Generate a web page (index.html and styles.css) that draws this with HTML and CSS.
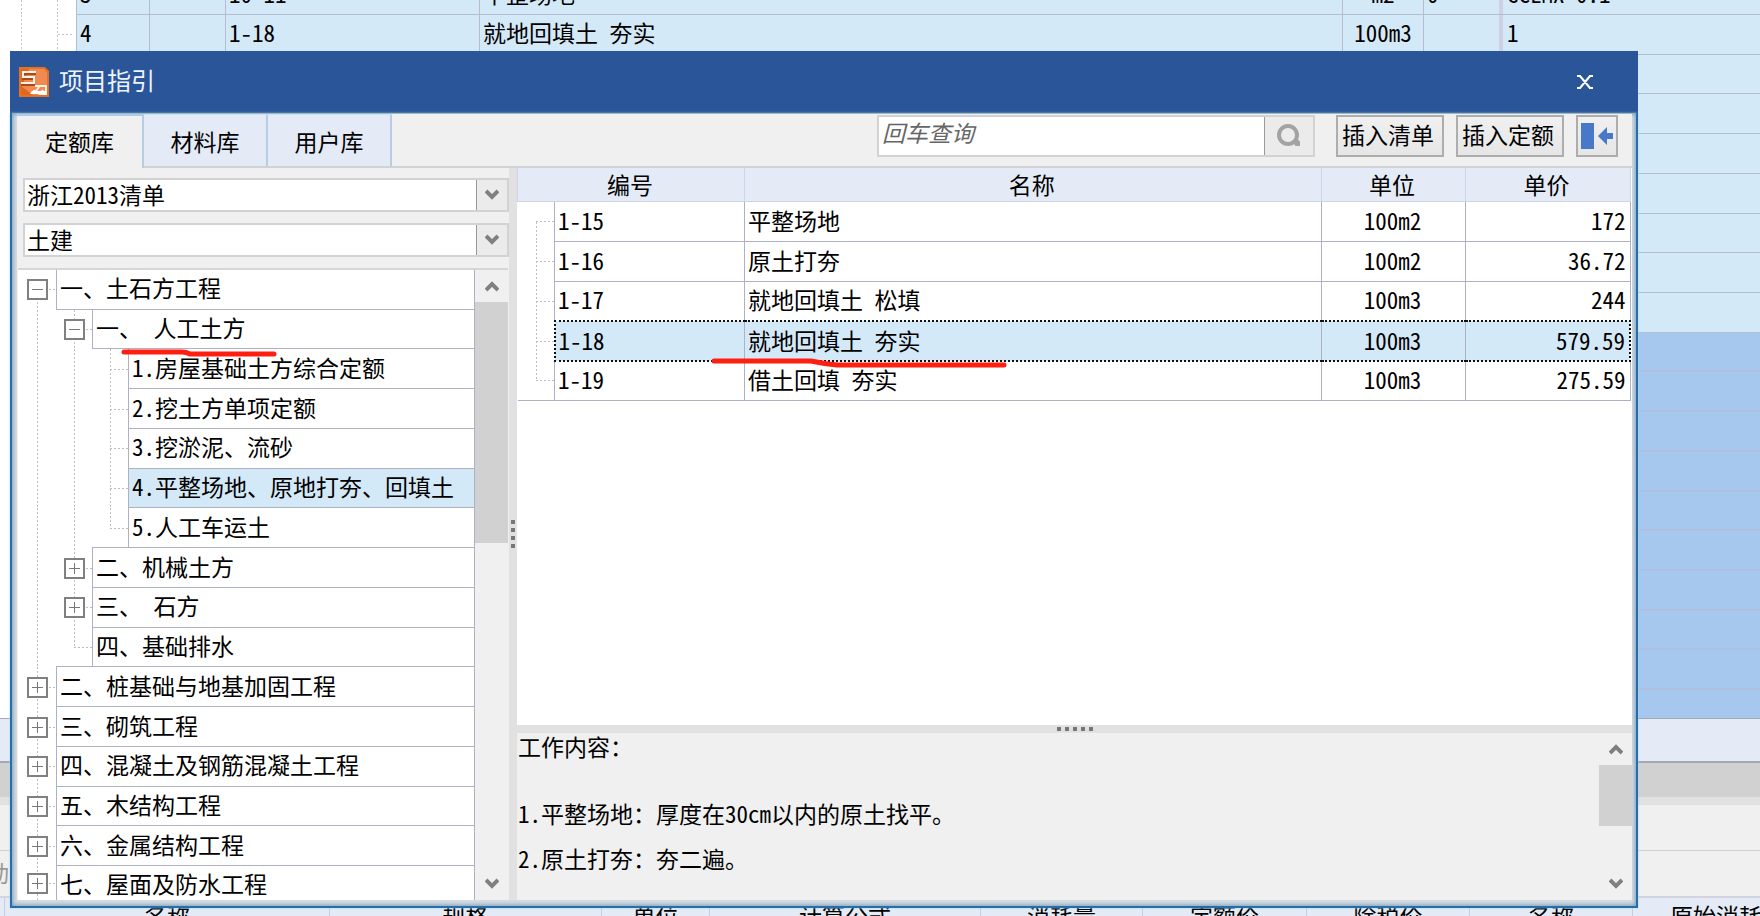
FILE: index.html
```html
<!DOCTYPE html>
<html lang="zh-CN">
<head>
<meta charset="utf-8">
<title>项目指引</title>
<link rel="stylesheet" href="styles.css">
</head>
<body>
<div class="workspace">
  <div class="sheet">
    <div class="sheet-row cut">
      <span class="gutter"></span><span class="cell n">3</span><span class="cell"></span><span class="cell n">10-11</span><span class="cell">平整场地</span><span class="cell unit n">m2</span><span class="cell n">0</span><span class="cell wide n">GCLMX*0.1</span>
    </div>
    <div class="sheet-row">
      <span class="gutter stub"></span><span class="cell n">4</span><span class="cell"></span><span class="cell n">1-18</span><span class="cell">就地回填土<i class="n">&nbsp;</i>夯实</span><span class="cell unit n">100m3</span><span class="cell"></span><span class="cell wide n">1</span>
    </div>
    <div class="sheet-row"></div><div class="sheet-row"></div><div class="sheet-row"></div><div class="sheet-row"></div><div class="sheet-row"></div><div class="sheet-row"></div><div class="sheet-row"></div>
    <div class="sheet-row deep"></div><div class="sheet-row deep"></div><div class="sheet-row deep"></div><div class="sheet-row deep"></div><div class="sheet-row deep"></div><div class="sheet-row deep"></div><div class="sheet-row deep"></div><div class="sheet-row deep"></div><div class="sheet-row deep"></div><div class="sheet-row deep last"></div>
  </div>
  <div class="band total"></div>
  <div class="band track"></div>
  <div class="band split"></div>
  <div class="band bar"></div>
  <div class="band tools">动</div>
  <div class="lower-head">
    <span></span><span>名称</span><span>规格</span><span>单位</span><span>计算公式</span><span>消耗量</span><span>定额价</span><span>除税价</span><span>名称</span><span class="rest">原始消耗</span>
  </div>
</div>

<section class="dialog" role="dialog" aria-labelledby="dialog-title">
  <header class="titlebar">
    <svg class="logo" viewBox="0 0 30 30" aria-hidden="true">
      <path d="M0 0h26l4 4v26H0z" fill="#e8701e"/>
      <path d="M2 2h23l3 3v23H2z" fill="#ee8a52"/>
      <path d="M2 2h8L2 22zM2 19l12 9H2z" fill="#e4661c"/>
      <path d="M17 7H4v5h11v6H2" fill="none" stroke="#a94a1c" stroke-width="2"/>
      <path d="M17 5H4v5h11v6H2" fill="none" stroke="#fff2e4" stroke-width="2"/>
      <path d="M16 19h12M20 20l-3 4h-3M27 19v8h-6l3-4" fill="none" stroke="#fff2e4" stroke-width="2"/>
      <path d="M13 24h14v3H11z" fill="#fff"/>
    </svg>
    <h1 id="dialog-title">项目指引</h1>
    <button class="close" type="button" aria-label="关闭">
      <svg viewBox="0 0 16 14"><path d="M0 1h4M12 1h4M0 13h4M12 13h4M3 1l10 12M13 1L3 13" fill="none" stroke="#fff" stroke-width="2"/></svg>
    </button>
  </header>

  <div class="dialog-body">
    <div class="toolbar">
      <div class="tabs" role="tablist">
        <button class="tab active" type="button" role="tab" aria-selected="true">定额库</button>
        <button class="tab" type="button" role="tab">材料库</button>
        <button class="tab" type="button" role="tab">用户库</button>
      </div>
      <div class="search">
        <input type="text" placeholder="回车查询" aria-label="回车查询">
        <button type="button" aria-label="查询"><svg viewBox="0 0 24 24"><circle cx="11" cy="11" r="9" fill="none" stroke="#a3a3a3" stroke-width="4"/><path d="M16 17l3 4h3v-3l-3-3" fill="#a3a3a3" stroke="#a3a3a3" stroke-width="2"/></svg></button>
      </div>
      <div class="actions">
        <button class="action" type="button">插入清单</button>
        <button class="action" type="button">插入定额</button>
        <button class="action icon" type="button" aria-label="停靠"><svg viewBox="0 0 34 28"><path d="M1 1h13v26H1zM18 14l9-9v6h6v6h-6v6z" fill="#4878c8"/></svg></button>
      </div>
    </div>

    <div class="main">
      <aside class="side">
        <div class="combo">
          <select aria-label="清单库"><option>浙江2013清单</option></select>
          <span class="combo-arrow"><svg class="chev" viewBox="0 0 14 12"><path d="M1 2l6 6 6-6" /></svg></span>
        </div>
        <div class="combo">
          <select aria-label="专业"><option>土建</option></select>
          <span class="combo-arrow"><svg class="chev" viewBox="0 0 14 12"><path d="M1 2l6 6 6-6" /></svg></span>
        </div>
        <div class="tree-box">
          <ul class="tree" role="tree">
            <li class="first"><span class="g half-b h"><button class="tg minus" type="button" aria-label="折叠"></button></span><span class="lb">一、土石方工程</span></li>
            <li><span class="g v"></span><span class="g v h"><button class="tg minus" type="button" aria-label="折叠"></button></span><span class="lb">一、<i class="n">&nbsp;</i>人工土方</span></li>
            <li><span class="g v"></span><span class="g v"></span><span class="g v h"></span><span class="lb"><i class="n">1.</i>房屋基础土方综合定额</span></li>
            <li><span class="g v"></span><span class="g v"></span><span class="g v h"></span><span class="lb"><i class="n">2.</i>挖土方单项定额</span></li>
            <li><span class="g v"></span><span class="g v"></span><span class="g v h"></span><span class="lb"><i class="n">3.</i>挖淤泥、流砂</span></li>
            <li><span class="g v"></span><span class="g v"></span><span class="g v h"></span><span class="lb on"><i class="n">4.</i>平整场地、原地打夯、回填土</span></li>
            <li><span class="g v"></span><span class="g v"></span><span class="g half-t h"></span><span class="lb"><i class="n">5.</i>人工车运土</span></li>
            <li><span class="g v"></span><span class="g v h"><button class="tg" type="button" aria-label="展开"></button></span><span class="lb">二、机械土方</span></li>
            <li><span class="g v"></span><span class="g v h"><button class="tg" type="button" aria-label="展开"></button></span><span class="lb">三、<i class="n">&nbsp;</i>石方</span></li>
            <li><span class="g v"></span><span class="g half-t h"></span><span class="lb">四、基础排水</span></li>
            <li><span class="g v h"><button class="tg" type="button" aria-label="展开"></button></span><span class="lb">二、桩基础与地基加固工程</span></li>
            <li><span class="g v h"><button class="tg" type="button" aria-label="展开"></button></span><span class="lb">三、砌筑工程</span></li>
            <li><span class="g v h"><button class="tg" type="button" aria-label="展开"></button></span><span class="lb">四、混凝土及钢筋混凝土工程</span></li>
            <li><span class="g v h"><button class="tg" type="button" aria-label="展开"></button></span><span class="lb">五、木结构工程</span></li>
            <li><span class="g v h"><button class="tg" type="button" aria-label="展开"></button></span><span class="lb">六、金属结构工程</span></li>
            <li><span class="g v h"><button class="tg" type="button" aria-label="展开"></button></span><span class="lb">七、屋面及防水工程</span></li>
          </ul>
          <div class="scroll">
            <span class="sb"><svg class="chev" viewBox="0 0 14 12"><path d="M1 10l6-6 6 6"/></svg></span>
            <span class="thumb tall"></span>
            <span class="sb end"><svg class="chev" viewBox="0 0 14 12"><path d="M1 2l6 6 6-6"/></svg></span>
          </div>
        </div>
      </aside>
      <div class="splitter-v"><i></i><i></i><i></i><i></i></div>
      <div class="content">
        <div class="table-area">
          <table>
            <colgroup><col class="c-gut"><col class="c-code"><col><col class="c-unit"><col class="c-price"></colgroup>
            <thead><tr><th colspan="2">编号</th><th>名称</th><th>单位</th><th>单价</th></tr></thead>
            <tbody>
              <tr><td class="gt half-b"></td><td class="n">1-15</td><td>平整场地</td><td class="n mid">100m2</td><td class="n num">172</td></tr>
              <tr><td class="gt"></td><td class="n">1-16</td><td>原土打夯</td><td class="n mid">100m2</td><td class="n num">36.72</td></tr>
              <tr><td class="gt"></td><td class="n">1-17</td><td>就地回填土<i class="n">&nbsp;</i>松填</td><td class="n mid">100m3</td><td class="n num">244</td></tr>
              <tr class="sel"><td class="gt"></td><td class="n">1-18</td><td>就地回填土<i class="n">&nbsp;</i>夯实</td><td class="n mid">100m3</td><td class="n num">579.59</td></tr>
              <tr class="last"><td class="gt half-t"></td><td class="n">1-19</td><td>借土回填<i class="n">&nbsp;</i>夯实</td><td class="n mid">100m3</td><td class="n num">275.59</td></tr>
            </tbody>
          </table>
        </div>
        <div class="splitter-h"><i></i><i></i><i></i><i></i><i></i></div>
        <div class="detail">
          <div class="detail-text">
            <p class="lead">工作内容：</p>
            <p><i class="n">1.</i>平整场地：厚度在<i class="n">30cm</i>以内的原土找平。</p>
            <p><i class="n">2.</i>原土打夯：夯二遍。</p>
          </div>
          <div class="scroll plain">
            <span class="sb"><svg class="chev" viewBox="0 0 14 12"><path d="M1 10l6-6 6 6"/></svg></span>
            <span class="thumb short"></span>
            <span class="sb end"><svg class="chev" viewBox="0 0 14 12"><path d="M1 2l6 6 6-6"/></svg></span>
          </div>
        </div>
      </div>
    </div>
  </div>
</section>

<svg class="mark mark-tree" viewBox="0 0 160 12" aria-hidden="true"><path d="M4 4h58q4 0 8 2h84"/></svg>
<svg class="mark mark-table" viewBox="0 0 300 12" aria-hidden="true"><path d="M4 4h97q14 3 26 4h167"/></svg>
</body>
</html>
```
FILE: styles.css
```css
* { box-sizing: border-box; }
body {
  margin: 0;
  height: 100vh;
  overflow: hidden;
  position: relative;
  background: #fff;
  color: #000;
  font: 23px/28px "Noto Sans CJK SC", "Liberation Sans", sans-serif;
}
i { font-style: normal; }
button, input, select { font: inherit; color: inherit; margin: 0; padding: 0; border: 0; border-radius: 0; background: none; }
.n { font-feature-settings: "hwid"; }

/* spreadsheet behind the dialog */
.workspace { height: 100vh; display: flex; flex-direction: column; }
.sheet {
  flex: 1;
  min-height: 0;
  display: grid;
  grid-template-rows: 15px repeat(17, minmax(0, 40fr)) minmax(0, 28fr);
  border-bottom: 1px solid #a3a9b4;
}
.sheet-row {
  display: grid;
  grid-template-columns: 76px 73px 76px 254px minmax(0, 1fr) 81px 76px 261px;
  background:
    linear-gradient(#b5bdd2, #b5bdd2) 76px 100% / 100% 1px no-repeat,
    linear-gradient(#d4e9f8, #d4e9f8) 76px 0 no-repeat;
  padding-bottom: 1px;
  overflow: hidden;
}
.sheet-row.deep {
  background:
    linear-gradient(#b0bfdf, #b0bfdf) 76px 100% / 100% 2px no-repeat,
    linear-gradient(#a6c8ef, #a6c8ef) 76px 0 no-repeat;
}
.sheet-row.last { background: linear-gradient(#a6c8ef, #a6c8ef) 76px 0 no-repeat; }
.sheet-row.cut { align-items: end; grid-template-rows: 14px; }
.cell { display: flex; align-items: center; padding: 0 0 4px 3px; border-left: 1px solid #b9bbd2; height: 100%; min-width: 0; white-space: nowrap; }
.cut .cell { align-items: flex-end; padding-bottom: 7px; }
.cell.unit { justify-content: center; padding-left: 0; }
.cell.wide { border-left: 4px solid #cfd0e4; padding-left: 4px; }
.gutter {
  height: 100%;
  background:
    repeating-linear-gradient(#c4c4c4 0 2px, #fff 2px 4px) 21px 0 / 1px 100% no-repeat,
    repeating-linear-gradient(#c4c4c4 0 2px, #fff 2px 4px) 57px 0 / 1px 100% no-repeat,
    #fff;
}
.gutter.stub {
  background:
    repeating-linear-gradient(#c4c4c4 0 2px, #fff 2px 4px) 21px 0 / 1px 100% no-repeat,
    repeating-linear-gradient(#c4c4c4 0 2px, #fff 2px 4px) 57px 0 / 1px 100% no-repeat,
    repeating-linear-gradient(90deg, #c4c4c4 0 2px, #fff 2px 4px) 58px 50% / 16px 1px no-repeat,
    #fff;
}
.band { flex: none; }
.total { height: 42px; background: #e4ebf7; }
.track { height: 36px; background: #d1d1d1; border-top: 2px solid #a3a9b4; }
.split { height: 8px; background: #e1e1e1; }
.bar { height: 46px; background: #f0f0f0; border-bottom: 1px solid #cfcfcf; }
.tools { height: 45px; background: #f0f0f0; color: #999; line-height: 42px; text-indent: -14px; }
.lower-head {
  flex: none;
  height: 20px;
  overflow: hidden;
  display: grid;
  grid-template-columns: 5px 325px 272px 108px 271px 162px 164px 163px 163px 1fr;
  background: #e4ebf7;
  border-top: 2px solid #d2d4df;
  text-align: center;
  line-height: 34px;
}
.lower-head span { border-right: 1px solid #c6cde2; height: 34px; }
.lower-head .rest { border: 0; text-align: left; padding-left: 37px; white-space: nowrap; }

/* dialog window */
.dialog { position: absolute; left: 10px; top: 51px; right: 122px; bottom: 8px; display: flex; flex-direction: column; }
.titlebar {
  flex: none;
  height: 62px;
  display: flex;
  align-items: center;
  padding: 0 45px 0 9px;
  background: #2a5699;
  border-bottom: 1px solid #2b4468;
}
.logo { width: 30px; height: 30px; }
h1 { flex: 1; margin: 0 0 0 10px; padding-bottom: 3px; font-size: 24px; font-weight: 400; color: #eef4ff; }
.close { display: flex; }
.close svg { width: 16px; height: 14px; }
.dialog-body {
  flex: 1;
  min-height: 0;
  display: flex;
  flex-direction: column;
  padding: 1px 4px 6px 5px;
  border: 2px solid #2a6ca3;
  border-top: 0;
  background: #d6dbe0;
  box-shadow: inset 0 0 4px 1px #6f9fc4, 0 0 2px #8fe0ff;
}
.toolbar {
  flex: none;
  height: 54px;
  display: flex;
  background: #f0f0f0;
  border-bottom: 2px solid #d0d2d6;
  padding-right: 14px;
}
.tabs { display: flex; flex: 1; }
.tab { width: 124px; height: 52px; background: #e4ebf7; border-top: 1px solid #cfe2f5; border-right: 2px solid #b7cde3; }
.tab.active { width: 127px; height: 54px; padding-bottom: 3px; background: #f0f0f0; border-top: 2px solid #a9cdf0; }
.search { width: 438px; height: 42px; margin: 1px 21px 0 0; display: flex; background: #fff; border: 2px solid #d2d2d2; }
.search input { flex: 1; min-width: 0; padding: 0 4px 8px 3px; font-style: italic; outline: 0; }
.search input::placeholder { color: #666; opacity: 1; }
.search button { width: 49px; display: flex; align-items: center; justify-content: center; background: #ebebeb; border-left: 1px solid #999; }
.search svg { width: 24px; height: 24px; }
.actions { display: flex; gap: 12px; padding-top: 1px; }
.action { height: 42px; width: 108px; padding: 0 4px 5px 0; background: linear-gradient(#f0f0f0, #e6e6e6); border: 2px solid #adadad; white-space: nowrap; }
.action.icon { width: 42px; padding: 0; display: flex; align-items: center; justify-content: center; }
.icon svg { width: 34px; height: 28px; flex: none; }
.main { flex: 1; min-height: 0; display: flex; }

/* left pane */
.side { width: 492px; flex: none; display: flex; flex-direction: column; background: #f0f0f0; padding-top: 10px; }
.combo { flex: none; height: 34px; margin: 0 0 11px 6px; display: grid; background: #fff; border: 2px solid #d2d2d2; }
.combo > * { grid-area: 1 / 1; }
.combo select { appearance: none; width: 100%; padding: 0 0 2px 2px; outline: 0; font-feature-settings: "hwid"; line-height: 28px; }
.combo-arrow { justify-self: end; width: 31px; display: flex; align-items: center; justify-content: center; background: #ebebeb; border-left: 1px solid #999; pointer-events: none; }
.chev { width: 14px; height: 12px; }
.chev path { fill: none; stroke: #808080; stroke-width: 4; }
.tree-box { flex: 1; min-height: 0; display: flex; background: #fff; border-top: 2px solid #d6d6d6; margin: 0 1px; }
.tree { flex: 1; min-width: 0; margin: 0; padding: 0; list-style: none; display: grid; grid-template-rows: repeat(15, minmax(0, 40fr)) minmax(0, 34fr); overflow: hidden; }
.tree li { display: flex; min-height: 0; }
.g { width: 36px; flex: none; display: flex; align-items: center; justify-content: center; background-repeat: no-repeat; }
.g:first-child { width: 38px; }
.v { background-image: repeating-linear-gradient(#bdbdbd 0 2px, transparent 2px 4px); background-size: 1px 100%; background-position: center; background-repeat: no-repeat; }
.v.h {
  background-image: repeating-linear-gradient(#bdbdbd 0 2px, transparent 2px 4px), repeating-linear-gradient(90deg, #bdbdbd 0 2px, transparent 2px 4px);
  background-size: 1px 100%, 50% 1px;
  background-position: center, right center;
}
.half-t.h, .half-b.h {
  background-image: repeating-linear-gradient(#bdbdbd 0 2px, transparent 2px 4px), repeating-linear-gradient(90deg, #bdbdbd 0 2px, transparent 2px 4px);
  background-size: 1px 50%, 50% 1px;
  background-position: center top, right center;
}
.half-b.h { background-position: center bottom, right center; }
.lb { flex: 1; min-width: 0; padding: 0 0 4px 3px; margin-top: -1px; border: 1px solid #b0b0c4; display: flex; align-items: center; white-space: nowrap; overflow: hidden; }
.tree li:last-child .lb { border-bottom: 0; padding-bottom: 0; }
.lb.on { background: #d4e9f8; }
.tg {
  width: 21px;
  height: 21px;
  border: 2px solid #808080;
  background:
    linear-gradient(#777, #777) center / 11px 1px no-repeat,
    linear-gradient(#777, #777) center / 1px 11px no-repeat,
    #fff;
}
.tg.minus { background: linear-gradient(#777, #777) center / 11px 1px no-repeat, #fff; }
.scroll { width: 33px; flex: none; display: flex; flex-direction: column; background: #f0f0f0; }
.sb { height: 32px; display: flex; align-items: center; justify-content: center; }
.sb.end { margin-top: auto; }
.thumb { background: #d1d1d1; }
.tall { height: 241px; }
.short { height: 61px; }
.splitter-v { width: 8px; flex: none; display: flex; flex-direction: column; align-items: center; justify-content: center; gap: 4px; background: #e1e1e1; }
.splitter-v i, .splitter-h i { width: 4px; height: 4px; background: #777; }

/* right pane */
.content { flex: 1; min-width: 0; display: flex; flex-direction: column; }
.table-area { flex: 1; min-height: 0; background: #fff; padding-right: 1px; }
table { width: 100%; table-layout: fixed; border-collapse: collapse; }
.c-gut { width: 37px; }
.c-code { width: 190px; }
.c-unit { width: 144px; }
.c-price { width: 165px; }
th { height: 33px; padding: 0 2px 1px 0; font-weight: 400; background: #e4ebf7; border: 1px solid #cdd3e8; border-top: 0; }
td { height: 40px; padding: 0 4px 3px 3px; border: 1px solid #b0b0c4; white-space: nowrap; }
td.mid { text-align: center; }
td.num { text-align: right; }
td.gt {
  border: 0;
  background:
    repeating-linear-gradient(#bdbdbd 0 2px, transparent 2px 4px) 18px 0 / 1px 100% no-repeat,
    repeating-linear-gradient(90deg, #bdbdbd 0 2px, transparent 2px 4px) 100% 50% / 18px 1px no-repeat;
}
td.gt.half-b {
  background:
    repeating-linear-gradient(#bdbdbd 0 2px, transparent 2px 4px) 18px 100% / 1px 50% no-repeat,
    repeating-linear-gradient(90deg, #bdbdbd 0 2px, transparent 2px 4px) 100% 50% / 18px 1px no-repeat;
}
td.gt.half-t {
  background:
    repeating-linear-gradient(#bdbdbd 0 2px, transparent 2px 4px) 18px 0 / 1px 50% no-repeat,
    repeating-linear-gradient(90deg, #bdbdbd 0 2px, transparent 2px 4px) 100% 50% / 18px 1px no-repeat;
}
tr.last td { height: 39px; }
tr.last td.gt { border-bottom: 1px solid #b0b0c4; }
.sel td:not(.gt) { background: #d4e9f8; border-top: 2px dotted #111; border-bottom: 2px dotted #111; }
.sel td:nth-child(2) { border-left: 2px dotted #111; }
.sel td:last-child { border-right: 2px dotted #111; }
.splitter-h { height: 8px; flex: none; display: flex; align-items: center; justify-content: center; gap: 4px; background: #e1e1e1; }
.detail { height: 167px; flex: none; display: flex; background: #f0f0f0; }
.detail-text { flex: 1; padding-left: 1px; }
.detail p { margin: 0; line-height: 45px; }
.detail .lead { line-height: 26px; margin-bottom: 32px; }

/* hand-drawn underlines */
.mark { position: absolute; overflow: visible; pointer-events: none; }
.mark path { fill: none; stroke: #ff1f10; stroke-width: 5; stroke-linecap: round; stroke-linejoin: round; }
.mark-tree { left: 120px; top: 348px; width: 160px; height: 12px; }
.mark-table { left: 710px; top: 357px; width: 300px; height: 12px; }
```
